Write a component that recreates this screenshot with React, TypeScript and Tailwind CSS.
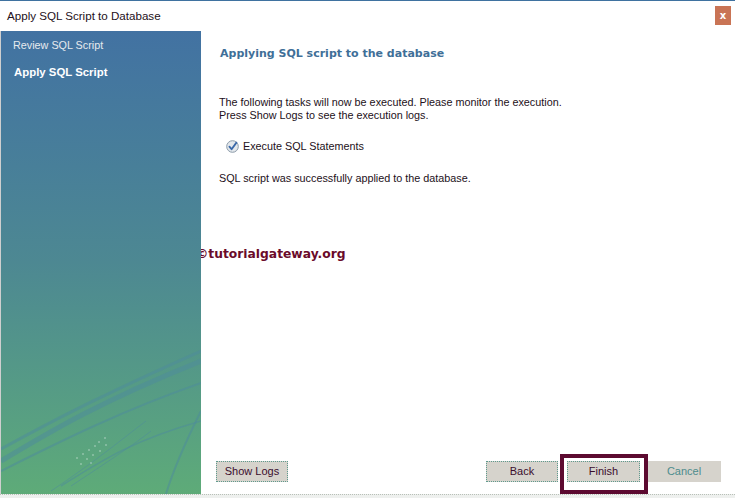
import React from "react";

const ui = { fontFamily: '"Liberation Sans", Arial, sans-serif' };
const bold = { fontFamily: '"DejaVu Sans", Verdana, sans-serif' };

function CheckIcon() {
  return (
    <svg width="13" height="13" viewBox="0 0 13 13">
      <circle cx="6.5" cy="6.5" r="5.8" fill="#e4e8ec" stroke="#8a9aa8" strokeWidth="1" />
      <path d="M3.4 6.6 L5.6 9.2 L10.4 2.6" fill="none" stroke="#3a68a8" strokeWidth="1.8" strokeLinecap="round" strokeLinejoin="round" />
    </svg>
  );
}

function SidebarArt() {
  // faint swooshes in the lower part of the wizard sidebar
  return (
    <svg className="absolute inset-0" width="200" height="463" viewBox="0 0 200 463">
      <g fill="none" stroke="#4f8c9a" strokeOpacity="0.55">
        <path d="M0 430 C50 400 100 370 200 330" strokeWidth="5" />
        <path d="M0 418 C60 385 110 360 200 320" strokeWidth="3" />
        <path d="M0 440 C60 410 120 380 200 352" strokeWidth="2" />
        <path d="M60 455 C100 430 130 410 200 390" strokeWidth="1.5" />
        <path d="M70 455 C105 432 135 412 150 400" strokeWidth="1" />
        <path d="M50 460 C95 430 125 405 145 390" strokeWidth="1" />
        <path d="M165 463 C175 430 190 400 200 380" strokeWidth="2" />
      </g>
      <g fill="#e8f4ee" fillOpacity="0.8">
        <circle cx="76" cy="427" r="0.7" />
        <circle cx="82" cy="423" r="0.7" />
        <circle cx="88" cy="419" r="0.7" />
        <circle cx="94" cy="415" r="0.7" />
        <circle cx="98" cy="411" r="0.7" />
        <circle cx="104" cy="407" r="0.7" />
        <circle cx="80" cy="433" r="0.7" />
        <circle cx="86" cy="428" r="0.7" />
        <circle cx="92" cy="424" r="0.7" />
        <circle cx="99" cy="420" r="0.7" />
        <circle cx="105" cy="414" r="0.7" />
        <circle cx="90" cy="432" r="0.7" />
      </g>
    </svg>
  );
}

function Btn({ label, className = "", disabled = false }: { label: string; className?: string; disabled?: boolean }) {
  return (
    <div
      className={
        "h-[21px] flex items-center justify-center bg-[#d6d3cc] text-[11px] " +
        (disabled ? "text-[#4d8c8c]" : "border border-dotted border-[#5f9a8e] text-[#3a0d2c]") +
        " " +
        className
      }
    >
      {label}
    </div>
  );
}

export default function App() {
  return (
    <div className="w-[735px] h-[498px] bg-white flex flex-col border-t border-[#3f72a0] relative overflow-hidden" style={ui}>
      <div className="h-[30px] flex items-center justify-between pl-[7px] pr-[4px]">
        <span className="text-[11.6px] text-[#241020]">Apply SQL Script to Database</span>
        <div className="w-[16px] h-[19px] bg-[#c97455] text-white text-[10px] font-bold flex items-center justify-center mb-[2px]" style={bold}>
          x
        </div>
      </div>
      <div className="flex flex-1 border-l border-[#cfcfcf]">
        <div className="w-[200px] relative bg-gradient-to-b from-[#4272a2] via-[#4d8892] to-[#5eab78]">
          <SidebarArt />
          <div className="relative pt-[6px] pl-[12px]">
            <div className="text-[10.8px] text-[#e6eaee] h-[16px] leading-[16px]">Review SQL Script</div>
            <div className="text-[11.4px] text-white font-bold h-[16px] leading-[16px] mt-[11px] pl-[1px]">
              Apply SQL Script
            </div>
          </div>
        </div>
        <div className="flex-1 flex flex-col pl-[18px]">
          <div className="mt-[15px] text-[11px] font-bold text-[#3f6f98] h-[16px] leading-[16px] pl-[1px]" style={bold}>
            Applying SQL script to the database
          </div>
          <div className="mt-[34px] text-[10.8px] text-[#231020] leading-[13px]">
            <div>The following tasks will now be executed. Please monitor the execution.</div>
            <div>Press Show Logs to see the execution logs.</div>
          </div>
          <div className="mt-[17px] flex items-center gap-[4px] pl-[7px] text-[10.8px] text-[#231020] h-[14px]">
            <CheckIcon />
            <span>Execute SQL Statements</span>
          </div>
          <div className="mt-[18px] text-[10.8px] text-[#231020] h-[14px] leading-[14px]">
            SQL script was successfully applied to the database.
          </div>
          <div className="mt-[61px] -ml-[23px] text-[12.3px] font-bold text-[#6a0a2a] h-[16px] leading-[16px]" style={bold}>
            ©tutorialgateway.org
          </div>
          <div className="flex-1" />
          <div className="flex items-center pr-[14px] pb-[12px] -ml-[3px]">
            <Btn label="Show Logs" className="w-[72px]" />
            <div className="flex-1" />
            <Btn label="Back" className="w-[72px]" />
            <div className="relative ml-[9px]">
              <Btn label="Finish" className="w-[73px]" />
              <div className="absolute left-[-7px] top-[-7px] w-[88px] h-[40px] border-4 border-[#5c0a30]" />
            </div>
            <Btn label="Cancel" disabled className="w-[74px] ml-[7px]" />
          </div>
        </div>
      </div>
      <div className="h-[4px] border-t border-dotted border-[#b8c0b8] bg-[#eef0ee]" />
    </div>
  );
}
